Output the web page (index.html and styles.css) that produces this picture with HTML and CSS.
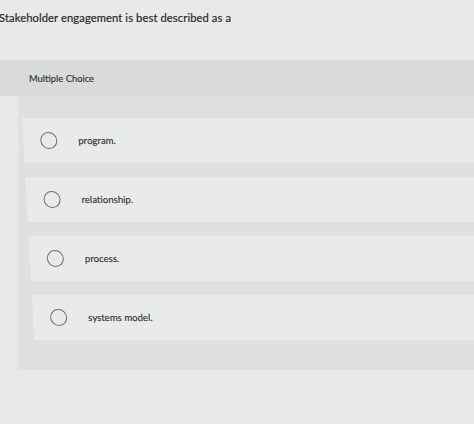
FILE: index.html
```html
<!DOCTYPE html>
<html lang="en">
<head>
<meta charset="utf-8">
<title>Multiple Choice</title>
<link rel="stylesheet" href="styles.css">
</head>
<body>
<div class="page">
  <h1 class="question">Stakeholder engagement is best described as a</h1>
  <section class="panel">
    <div class="panel-header">Multiple Choice</div>
    <div class="panel-body">
      <ul class="options">
        <li class="option"><span class="radio"></span><span class="label">program.</span></li>
        <li class="option"><span class="radio"></span><span class="label">relationship.</span></li>
        <li class="option"><span class="radio"></span><span class="label">process.</span></li>
        <li class="option"><span class="radio"></span><span class="label">systems model.</span></li>
      </ul>
    </div>
  </section>
</div>
</body>
</html>
```

FILE: styles.css
```css
html, body {
  margin: 0;
  padding: 0;
  background: #e8e9e8;
  overflow: hidden;
}
.page {
  width: 474px;
  height: 424px;
  font-family: Lato, "Open Sans", "Liberation Sans", sans-serif;
  color: #2e2e2e;
}
.question {
  margin: 0;
  padding: 10px 0 0 0;
  margin-left: -1px;
  font-size: 11.2px;
  font-weight: 400;
  line-height: 16px;
  height: 51px;
  box-sizing: border-box;
  letter-spacing: 0.1px;
  color: #2a2a2a;
  -webkit-text-stroke: 0.2px #2a2a2a;
}
.panel {
  margin-top: 9px;
}
.panel-header {
  height: 36px;
  display: flex;
  align-items: center;
  padding-left: 29px;
  background: #d9dbda;
  font-size: 9.4px;
  color: #333;
  -webkit-text-stroke: 0.15px #333;
}
.panel-body {
  margin-left: 18px;
  background: #dfe1e0;
  padding: 22px 0 30px 4px;
}
.options {
  list-style: none;
  margin: 0;
  padding: 0;
  display: flex;
  flex-direction: column;
  gap: 14px;
  transform: skewX(3.2deg);
  transform-origin: 0 0;
}
.option {
  height: 45px;
  background: #e9ebea;
  display: flex;
  align-items: center;
  padding-left: 17px;
  gap: 21px;
}
.radio {
  width: 17px;
  height: 17px;
  box-sizing: border-box;
  border: 1px solid #6d6f6e;
  border-radius: 50%;
  flex: none;
}
.label {
  font-size: 9.6px;
  color: #333;
  -webkit-text-stroke: 0.15px #333;
}
```
